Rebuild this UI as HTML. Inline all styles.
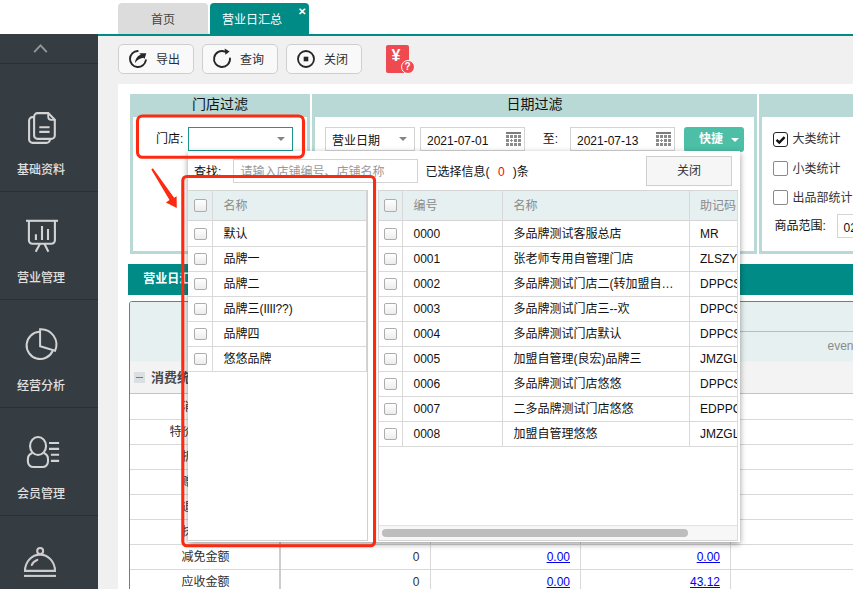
<!DOCTYPE html>
<html lang="zh-CN">
<head>
<meta charset="utf-8">
<title>营业日汇总</title>
<style>
*{box-sizing:border-box;margin:0;padding:0}
html,body{width:853px;height:589px;overflow:hidden;background:#fff}
body{position:relative;font-family:"Liberation Sans","Noto Sans CJK SC",sans-serif;font-size:12px;color:#111}
.abs{position:absolute}
/* top tabs */
#tabline{left:98px;top:34px;width:755px;height:1.9px;background:#008b87}
.tab{top:3.2px;height:31.3px;line-height:34.2px;text-align:center;font-size:12px;border-radius:4px 4px 0 0}
#tab1{left:118px;width:90px;background:#dcdcdc;color:#444}
#tab2{left:210px;width:99px;background:#008b87;color:#fff;text-align:left;padding-left:12px}
#tab2 .x{position:absolute;left:87.5px;top:-8.3px;font-size:10px;font-weight:bold}
/* sidebar */
#side{left:0;top:34px;width:98px;height:555px;background:#353d42}
.sdiv{left:0;width:98px;height:1px;background:#2a3135}
.slabel{left:0;width:82px;text-align:center;color:#e0e0e0;font-size:12px;font-weight:500;line-height:14px}
/* main */
#main{left:98px;top:35.9px;width:755px;height:554px;background:#f0f0f0}
#panel{left:118px;top:84px;width:735px;height:505px;background:#fff}
.btn{top:44px;height:30px;width:76px;border:1px solid #cfcfcf;border-radius:5px;background:#f9f9f9;font-size:12px;line-height:28px;color:#2e2e2e}
.btn span{position:absolute;left:37px;top:0.75px}
.btn svg{position:absolute;left:7px;top:2.2px}
/* filter boxes */
.fbox{top:94px;height:160px;border:3px solid #b8d9d6;border-top-width:23px;background:#fff}
.fhead{top:93px;height:23px;line-height:22px;text-align:center;font-size:14px;color:#111}
.inp{border:1px solid #d4d4d4;background:#fff;height:24px;line-height:22px;font-size:12px;padding-left:6px;padding-top:2.1px;color:#111}
.cb{width:15px;height:15px;border:1px solid #8a8a8a;border-radius:2px;background:#fff}
/* section bar */
#secbar{left:128px;top:264px;width:725px;height:31px;background:#008b87;color:#fff;font-weight:bold;font-size:12px;line-height:31px;padding-left:15.2px}
/* report table */
#rep{left:129px;top:301px;width:727px;height:291px;border:1.3px solid #2a9d98;border-radius:3px;background:#fff}
.hl{height:1px;background:#d9d9d9}
.vl{width:1px;background:#d9d9d9}
.rt{font-size:12px;line-height:14px;color:#303030}
a.lk{color:#0000ee;text-decoration:underline}
/* popup */
#pop{left:188px;top:151px;width:552px;height:391.4px;background:#fff;box-shadow:0 2px 6px rgba(0,0,0,.4)}
.gh{background:#e6f0f0;color:#8a8a8a}
.gcb{width:12.5px;height:12.5px;border:1px solid #adadad;border-radius:2px;background:linear-gradient(#fff,#ececec)}
.grow{font-size:12px;line-height:14px;color:#111}
</style>
</head>
<body>
<!-- top tabs -->
<div class="abs tab" id="tab1">首页</div>
<div class="abs tab" id="tab2">营业日汇总<span class="x">✕</span></div>
<div class="abs" id="tabline"></div>

<!-- main bg -->
<div class="abs" id="main"></div>
<div class="abs" id="panel"></div>

<!-- sidebar -->
<div class="abs" id="side"></div>

<svg class="abs" style="left:0;top:34px" width="98" height="555" viewBox="0 34 98 555" fill="none" stroke="#d3d3d3" stroke-width="1.9" stroke-linecap="round" stroke-linejoin="round">
  <!-- chevron -->
  <path d="M34.2 52.1 L40.5 45.3 L46.8 52.1" stroke="#92979a" stroke-width="1.9" stroke-linecap="butt" stroke-linejoin="miter"/>
  <!-- docs icon -->
  <g stroke-width="2.1">
  <path d="M33 117.1 H32.6 a3.5 3.5 0 0 0 -3.5 3.5 V139.4 a3.5 3.5 0 0 0 3.5 3.5 H46.4 a3.5 3.5 0 0 0 3.5 -3.5 V140"/>
  <path d="M37.6 113.1 H48.2 L54.8 119.8 V135.4 a3.5 3.5 0 0 1 -3.5 3.5 H37.6 a3.5 3.5 0 0 1 -3.5 -3.5 V116.6 a3.5 3.5 0 0 1 3.5 -3.5 Z"/>
  <path d="M48.2 113.1 V116.8 a3 3 0 0 0 3 3 H54.8" stroke-width="1.8"/>
  <path d="M39.3 127.2 H49.6 M39.3 131.9 H49.6" stroke-linecap="butt"/>
  </g>
  <!-- board icon -->
  <g stroke-width="2.1" stroke-linecap="butt">
  <path d="M26 220.8 H58"/>
  <path d="M28.9 220.8 V240.3 a3.5 3.5 0 0 0 3.5 3.5 H51.4 a3.5 3.5 0 0 0 3.5 -3.5 V220.8"/>
  <path d="M40 243.8 L35.7 251.7 M44.4 243.8 L48.4 251.7"/>
  <path d="M35.9 234.2 V239.9 M42 226.1 V239.9 M48 229 V239.9"/>
  </g>
  <!-- pie icon -->
  <path d="M39.1 331.85 A13.6 13.6 0 1 0 52.5 351.2" stroke-width="2"/>
  <path d="M40.1 329.2 A15.4 15.4 0 0 1 55.1 350.7 L40.1 346.3 Z" stroke-width="2" stroke-linejoin="miter"/>
  <!-- member icon -->
  <g stroke-width="2.1">
  <ellipse cx="38.05" cy="446" rx="8" ry="9"/>
  <path d="M31.7 453.3 C29.2 454.4 27.9 456.6 27.9 459.2 V461.5 a5.5 5.5 0 0 0 5.5 5.5 H42.5 a5.5 5.5 0 0 0 5.5 -5.5 V459.2 C48 456.6 46.7 454.4 44.3 453.3"/>
  <path d="M49 443 H59.1 M49 448.9 H59.1 M50.9 454.8 H59.1 M50.9 460.9 H59.1" stroke-linecap="butt"/>
  </g>
  <!-- dome icon -->
  <g stroke-width="2.1" stroke="#cfcbcd">
  <circle cx="40.15" cy="551" r="2.95"/>
  <path d="M25 570.9 A15 16.3 0 0 1 55 570.9 Z" stroke-linejoin="miter"/>
  <path d="M31.8 565 C32.6 562.7 34.8 560.7 37.3 559.9"/>
  <path d="M24 575.9 H56" stroke-linecap="butt"/>
  </g>
</svg>
<div class="abs sdiv" style="top:63px"></div>
<div class="abs sdiv" style="top:191px"></div>
<div class="abs sdiv" style="top:299px"></div>
<div class="abs sdiv" style="top:407px"></div>
<div class="abs sdiv" style="top:515px"></div>
<div class="abs slabel" style="top:163px">基础资料</div>
<div class="abs slabel" style="top:270.8px">营业管理</div>
<div class="abs slabel" style="top:378.6px">经营分析</div>
<div class="abs slabel" style="top:486.8px">会员管理</div>



<div class="abs btn" style="left:118px">
  <svg width="24" height="24" viewBox="0 0 24 24" fill="none" stroke="#262626" stroke-width="1.9" stroke-linecap="round"><path d="M11.7 4 A8 8 0 1 0 19.9 13.2"/><path d="M9 16 C9.2 11.4 12 8.2 15.4 7.4 L17.8 10.8 C14.4 10.9 11.4 12.8 9 16 Z" fill="#262626" stroke="none"/><path d="M13.4 6.2 L20.3 6.2 L18.5 12 Z" fill="#262626" stroke="none"/></svg>
  <span>导出</span></div>
<div class="abs btn" style="left:202px">
  <svg width="24" height="24" viewBox="0 0 24 24" fill="none" stroke="#262626" stroke-width="1.9" stroke-linecap="round" style="left:7px"><path d="M20 11.4 A8 8 0 1 1 15 4.6"/><path d="M14.6 1.6 L19.6 4.6 L15.4 7.8 Z" fill="#262626" stroke="none"/></svg>
  <span>查询</span></div>
<div class="abs btn" style="left:286px">
  <svg width="24" height="24" viewBox="0 0 24 24" fill="none" stroke="#262626" stroke-width="1.8" style="left:6.7px"><circle cx="12" cy="12" r="8"/><rect x="9.7" y="9.7" width="4.6" height="4.6" fill="#262626" stroke="none"/></svg>
  <span>关闭</span></div>
<div class="abs" style="left:386px;top:45px;width:23px;height:28px;background:#ee4a50;border-radius:2px;color:#fff;font-size:16px;font-weight:bold;line-height:16px;padding:2.5px 0 0 5.5px;overflow:hidden">¥</div>
<div class="abs" style="left:400.5px;top:60px;width:14px;height:14px;border-radius:7px;background:#ee4a50;border:1.5px solid #fff;color:#fff;font-size:10px;font-weight:bold;line-height:11px;text-align:center">?</div>

<div class="abs fbox" style="left:130px;width:180px"></div>
<div class="abs fbox" style="left:312px;width:445px"></div>
<div class="abs fbox" style="left:759px;width:110px"></div>
<div class="abs fhead" style="left:130px;width:180px">门店过滤</div>
<div class="abs fhead" style="left:312px;width:445px">日期过滤</div>
<div class="abs" style="left:156px;top:132px;line-height:14px;font-size:12px">门店:</div>
<div class="abs" style="left:188px;top:127px;width:105px;height:24px;border:1px solid #1a9791;background:#fff"></div>
<div class="abs" style="left:277px;top:137.2px;border:4px solid transparent;border-top:4px solid #858585;border-bottom:0"></div>
<div class="abs inp" style="left:325px;top:127px;width:90px">营业日期</div>
<div class="abs" style="left:399px;top:137.2px;border:4px solid transparent;border-top:4px solid #858585;border-bottom:0"></div>
<div class="abs inp" style="left:420px;top:127px;width:104.5px">2021-07-01</div>
<svg class="abs" style="left:506px;top:132px" width="15" height="14" viewBox="0 0 15 14"><rect x="0" y="0" width="15" height="2" fill="#7c7c7c"/><g fill="#8b8b8b"><rect x="0" y="3" width="3" height="3"/><rect x="4" y="3" width="3" height="3"/><rect x="8" y="3" width="3" height="3"/><rect x="12" y="3" width="3" height="3"/><rect x="0" y="7" width="3" height="3"/><rect x="5" y="7" width="1" height="3"/><rect x="4" y="8" width="3" height="1"/><rect x="8" y="7" width="3" height="3"/><rect x="12" y="7" width="3" height="3"/><rect x="0" y="11" width="3" height="3"/><rect x="4" y="11" width="3" height="3"/><rect x="8" y="11" width="3" height="3"/><rect x="12" y="11" width="3" height="3"/></g></svg>
<div class="abs" style="left:542.8px;top:132px;line-height:14px;font-size:12px">至:</div>
<div class="abs inp" style="left:570px;top:127px;width:104.5px">2021-07-13</div>
<svg class="abs" style="left:656px;top:132px" width="15" height="14" viewBox="0 0 15 14"><rect x="0" y="0" width="15" height="2" fill="#7c7c7c"/><g fill="#8b8b8b"><rect x="0" y="3" width="3" height="3"/><rect x="4" y="3" width="3" height="3"/><rect x="8" y="3" width="3" height="3"/><rect x="12" y="3" width="3" height="3"/><rect x="0" y="7" width="3" height="3"/><rect x="5" y="7" width="1" height="3"/><rect x="4" y="8" width="3" height="1"/><rect x="8" y="7" width="3" height="3"/><rect x="12" y="7" width="3" height="3"/><rect x="0" y="11" width="3" height="3"/><rect x="4" y="11" width="3" height="3"/><rect x="8" y="11" width="3" height="3"/><rect x="12" y="11" width="3" height="3"/></g></svg>
<div class="abs" style="left:684px;top:127px;width:60px;height:24.5px;background:#4cbfa6;border-radius:3px;color:#fff;font-weight:bold;font-size:12px;line-height:25px;padding-left:15px">快捷</div>
<div class="abs" style="left:730.5px;top:137.5px;border:4px solid transparent;border-top:4.5px solid #fff;border-bottom:0"></div>
<div class="abs cb" style="left:773px;top:132px;border:1.5px solid #262626;border-radius:3px"></div>
<svg class="abs" style="left:773px;top:132px" width="15" height="15" viewBox="0 0 15 15"><path d="M3.5 7.9 L6.3 10.5 L11.6 5.2" fill="none" stroke="#111" stroke-width="2.4"/></svg>
<div class="abs cb" style="left:773px;top:161px"></div>
<div class="abs cb" style="left:773px;top:190px"></div>
<div class="abs" style="left:792.5px;top:132px;line-height:14px;font-size:12px;color:#333">大类统计</div>
<div class="abs" style="left:792.5px;top:161.5px;line-height:14px;font-size:12px;color:#333">小类统计</div>
<div class="abs" style="left:792.5px;top:190.5px;line-height:14px;font-size:12px;color:#333;white-space:nowrap">出品部统计</div>
<div class="abs" style="left:774.5px;top:218.5px;line-height:14px;font-size:12px;color:#111;white-space:nowrap">商品范围:</div>
<div class="abs inp" style="left:836.5px;top:214px;width:40px">02</div>
<div class="abs" id="secbar">营业日汇总</div>


<div class="abs" id="rep"></div>
<div class="abs" style="left:130px;top:302px;width:723px;height:59px;background:#e6f0f0;border-radius:2px 0 0 0"></div>
<div class="abs hl" style="left:280px;top:331px;width:573px;background:#b9bcbc"></div>
<div class="abs vl" style="left:280px;top:302px;height:59px;background:#cfd6d6"></div>
<div class="abs rt" style="left:130px;top:324px;width:150px;text-align:center;color:#888">项目</div>
<div class="abs rt" style="left:827.5px;top:338.5px;color:#8a8a8a;white-space:nowrap">even</div>
<div class="abs" style="left:130px;top:361px;width:723px;height:33px;background:#f3f3f3;border-top:1px solid #eef2f2;border-bottom:1px solid #c4c4c4"></div>
<div class="abs" style="left:134px;top:372px;width:11px;height:11px;background:#dcdfe2"></div><div class="abs" style="left:136px;top:376.7px;width:7px;height:1.3px;background:#7a7a7a"></div>
<div class="abs" style="left:151px;top:370px;font-size:13px;font-weight:700;line-height:16px;color:#484848">消费统计</div>
<div class="abs hl" style="left:130px;top:419.0px;width:723px"></div>
<div class="abs rt" style="left:130px;top:399.5px;width:99.5px;text-align:right">消费金额</div>
<div class="abs rt" style="left:300px;top:399.5px;width:119.5px;text-align:right">0</div>
<div class="abs rt" style="left:450px;top:399.5px;width:120px;text-align:right"><a class="lk">0.00</a></div>
<div class="abs rt" style="left:600px;top:399.5px;width:120px;text-align:right"><a class="lk">0.00</a></div>
<div class="abs hl" style="left:130px;top:444.0px;width:723px"></div>
<div class="abs rt" style="left:130px;top:424.5px;width:99.5px;text-align:right">特价菜金额</div>
<div class="abs rt" style="left:300px;top:424.5px;width:119.5px;text-align:right">0</div>
<div class="abs rt" style="left:450px;top:424.5px;width:120px;text-align:right"><a class="lk">0.00</a></div>
<div class="abs rt" style="left:600px;top:424.5px;width:120px;text-align:right"><a class="lk">0.00</a></div>
<div class="abs hl" style="left:130px;top:469.0px;width:723px"></div>
<div class="abs rt" style="left:130px;top:449.5px;width:99.5px;text-align:right">折扣金额</div>
<div class="abs rt" style="left:300px;top:449.5px;width:119.5px;text-align:right">0</div>
<div class="abs rt" style="left:450px;top:449.5px;width:120px;text-align:right"><a class="lk">0.00</a></div>
<div class="abs rt" style="left:600px;top:449.5px;width:120px;text-align:right"><a class="lk">0.00</a></div>
<div class="abs hl" style="left:130px;top:494.0px;width:723px"></div>
<div class="abs rt" style="left:130px;top:474.5px;width:99.5px;text-align:right">赠送金额</div>
<div class="abs rt" style="left:300px;top:474.5px;width:119.5px;text-align:right">0</div>
<div class="abs rt" style="left:450px;top:474.5px;width:120px;text-align:right"><a class="lk">0.00</a></div>
<div class="abs rt" style="left:600px;top:474.5px;width:120px;text-align:right"><a class="lk">0.00</a></div>
<div class="abs hl" style="left:130px;top:519.0px;width:723px"></div>
<div class="abs rt" style="left:130px;top:499.5px;width:99.5px;text-align:right">退菜金额</div>
<div class="abs rt" style="left:300px;top:499.5px;width:119.5px;text-align:right">0</div>
<div class="abs rt" style="left:450px;top:499.5px;width:120px;text-align:right"><a class="lk">0.00</a></div>
<div class="abs rt" style="left:600px;top:499.5px;width:120px;text-align:right"><a class="lk">0.00</a></div>
<div class="abs hl" style="left:130px;top:544.0px;width:723px"></div>
<div class="abs rt" style="left:130px;top:524.5px;width:99.5px;text-align:right">抹零金额</div>
<div class="abs rt" style="left:300px;top:524.5px;width:119.5px;text-align:right">0</div>
<div class="abs rt" style="left:450px;top:524.5px;width:120px;text-align:right"><a class="lk">0.00</a></div>
<div class="abs rt" style="left:600px;top:524.5px;width:120px;text-align:right"><a class="lk">0.00</a></div>
<div class="abs hl" style="left:130px;top:569.0px;width:723px"></div>
<div class="abs rt" style="left:130px;top:549.5px;width:99.5px;text-align:right">减免金额</div>
<div class="abs rt" style="left:300px;top:549.5px;width:119.5px;text-align:right">0</div>
<div class="abs rt" style="left:450px;top:549.5px;width:120px;text-align:right"><a class="lk">0.00</a></div>
<div class="abs rt" style="left:600px;top:549.5px;width:120px;text-align:right"><a class="lk">0.00</a></div>
<div class="abs hl" style="left:130px;top:594.0px;width:723px"></div>
<div class="abs rt" style="left:130px;top:574.5px;width:99.5px;text-align:right">应收金额</div>
<div class="abs rt" style="left:300px;top:574.5px;width:119.5px;text-align:right">0</div>
<div class="abs rt" style="left:450px;top:574.5px;width:120px;text-align:right"><a class="lk">0.00</a></div>
<div class="abs rt" style="left:600px;top:574.5px;width:120px;text-align:right"><a class="lk">43.12</a></div>
<div class="abs vl" style="left:279.3px;top:393.5px;height:200px;width:1.3px;background:#cdcdcd"></div>
<div class="abs vl" style="left:430px;top:393.5px;height:200px"></div>
<div class="abs vl" style="left:580px;top:393.5px;height:200px"></div>
<div class="abs vl" style="left:730px;top:393.5px;height:200px"></div>


<div class="abs" id="pop"></div>
<div class="abs" style="left:194px;top:164.8px;font-size:12px;line-height:14px;color:#111">查找:</div>
<div class="abs inp" style="left:233px;top:159px;width:185px;height:23.5px;color:#999;padding-left:6.5px;padding-top:1.3px;white-space:nowrap;overflow:hidden">请输入店铺编号、店铺名称</div>
<div class="abs" style="left:425.5px;top:164.5px;font-size:12px;line-height:14px;color:#111;white-space:nowrap">已选择信息(<span style="color:#f00;margin:0 8px 0 8.5px">0</span>)条</div>
<div class="abs" style="left:646px;top:156px;width:86px;height:29.6px;border:1px solid #cfcfcf;background:#f6f6f6;font-size:12px;line-height:29px;text-align:center;color:#333">关闭</div>
<div class="abs gh" style="left:188px;top:190px;width:178px;height:31px;border-top:1px solid #d5d5d5;border-bottom:1px solid #d5d5d5"></div>
<div class="abs vl" style="left:212px;top:190.5px;height:181px"></div>
<div class="abs gcb" style="left:194px;top:199px"></div>
<div class="abs grow" style="left:223.5px;top:198.5px;color:#8a8a8a">名称</div>
<div class="abs hl" style="left:188px;top:245.5px;width:178px"></div>
<div class="abs gcb" style="left:194px;top:227.5px"></div>
<div class="abs grow" style="left:223.5px;top:227px;white-space:nowrap">默认</div>
<div class="abs hl" style="left:188px;top:270.5px;width:178px"></div>
<div class="abs gcb" style="left:194px;top:252.5px"></div>
<div class="abs grow" style="left:223.5px;top:252px;white-space:nowrap">品牌一</div>
<div class="abs hl" style="left:188px;top:295.5px;width:178px"></div>
<div class="abs gcb" style="left:194px;top:277.5px"></div>
<div class="abs grow" style="left:223.5px;top:277px;white-space:nowrap">品牌二</div>
<div class="abs hl" style="left:188px;top:320.5px;width:178px"></div>
<div class="abs gcb" style="left:194px;top:302.5px"></div>
<div class="abs grow" style="left:223.5px;top:302px;white-space:nowrap">品牌三(<span style="letter-spacing:-0.35px">IIII</span>??)</div>
<div class="abs hl" style="left:188px;top:345.5px;width:178px"></div>
<div class="abs gcb" style="left:194px;top:327.5px"></div>
<div class="abs grow" style="left:223.5px;top:327px;white-space:nowrap">品牌四</div>
<div class="abs hl" style="left:188px;top:370.5px;width:178px"></div>
<div class="abs gcb" style="left:194px;top:352.5px"></div>
<div class="abs grow" style="left:223.5px;top:352px;white-space:nowrap">悠悠品牌</div>
<div class="abs vl" style="left:367px;top:190px;height:350.5px;background:#d0d0d0"></div><div class="abs vl" style="left:366px;top:190px;height:182px;background:#d4d4d4"></div>

<div class="abs hl" style="left:188px;top:540px;width:180px;background:#d2d2d2"></div>
<div class="abs gh" style="left:379px;top:190px;width:358.5px;height:31px;border-top:1px solid #d5d5d5;border-bottom:1px solid #d5d5d5"></div>
<div class="abs gcb" style="left:384px;top:199px"></div>
<div class="abs grow" style="left:413.5px;top:198.5px;color:#8a8a8a">编号</div>
<div class="abs grow" style="left:513.5px;top:198.5px;color:#8a8a8a">名称</div>
<div class="abs grow" style="left:700px;top:198.5px;color:#8a8a8a;width:37.5px;overflow:hidden;white-space:nowrap">助记码</div>
<div class="abs hl" style="left:379px;top:245.5px;width:358.5px"></div>
<div class="abs gcb" style="left:384px;top:227.5px"></div>
<div class="abs grow" style="left:413.5px;top:227px">0000</div>
<div class="abs grow" style="left:513.5px;top:227px;white-space:nowrap">多品牌测试客服总店</div>
<div class="abs grow" style="left:700px;top:227px;width:37.5px;overflow:hidden;white-space:nowrap">MR</div>
<div class="abs hl" style="left:379px;top:270.5px;width:358.5px"></div>
<div class="abs gcb" style="left:384px;top:252.5px"></div>
<div class="abs grow" style="left:413.5px;top:252px">0001</div>
<div class="abs grow" style="left:513.5px;top:252px;white-space:nowrap">张老师专用自管理门店</div>
<div class="abs grow" style="left:700px;top:252px;width:37.5px;overflow:hidden;white-space:nowrap">ZLSZYZGLMD</div>
<div class="abs hl" style="left:379px;top:295.5px;width:358.5px"></div>
<div class="abs gcb" style="left:384px;top:277.5px"></div>
<div class="abs grow" style="left:413.5px;top:277px">0002</div>
<div class="abs grow" style="left:513.5px;top:277px;white-space:nowrap">多品牌测试门店二(转加盟自…</div>
<div class="abs grow" style="left:700px;top:277px;width:37.5px;overflow:hidden;white-space:nowrap">DPPCSMD</div>
<div class="abs hl" style="left:379px;top:320.5px;width:358.5px"></div>
<div class="abs gcb" style="left:384px;top:302.5px"></div>
<div class="abs grow" style="left:413.5px;top:302px">0003</div>
<div class="abs grow" style="left:513.5px;top:302px;white-space:nowrap">多品牌测试门店三--欢</div>
<div class="abs grow" style="left:700px;top:302px;width:37.5px;overflow:hidden;white-space:nowrap">DPPCSMD</div>
<div class="abs hl" style="left:379px;top:345.5px;width:358.5px"></div>
<div class="abs gcb" style="left:384px;top:327.5px"></div>
<div class="abs grow" style="left:413.5px;top:327px">0004</div>
<div class="abs grow" style="left:513.5px;top:327px;white-space:nowrap">多品牌测试门店默认</div>
<div class="abs grow" style="left:700px;top:327px;width:37.5px;overflow:hidden;white-space:nowrap">DPPCSMD</div>
<div class="abs hl" style="left:379px;top:370.5px;width:358.5px"></div>
<div class="abs gcb" style="left:384px;top:352.5px"></div>
<div class="abs grow" style="left:413.5px;top:352px">0005</div>
<div class="abs grow" style="left:513.5px;top:352px;white-space:nowrap">加盟自管理(良宏)品牌三</div>
<div class="abs grow" style="left:700px;top:352px;width:37.5px;overflow:hidden;white-space:nowrap">JMZGLLH</div>
<div class="abs hl" style="left:379px;top:395.5px;width:358.5px"></div>
<div class="abs gcb" style="left:384px;top:377.5px"></div>
<div class="abs grow" style="left:413.5px;top:377px">0006</div>
<div class="abs grow" style="left:513.5px;top:377px;white-space:nowrap">多品牌测试门店悠悠</div>
<div class="abs grow" style="left:700px;top:377px;width:37.5px;overflow:hidden;white-space:nowrap">DPPCSMD</div>
<div class="abs hl" style="left:379px;top:420.5px;width:358.5px"></div>
<div class="abs gcb" style="left:384px;top:402.5px"></div>
<div class="abs grow" style="left:413.5px;top:402px">0007</div>
<div class="abs grow" style="left:513.5px;top:402px;white-space:nowrap">二多品牌测试门店悠悠</div>
<div class="abs grow" style="left:700px;top:402px;width:37.5px;overflow:hidden;white-space:nowrap">EDPPCSMD</div>
<div class="abs hl" style="left:379px;top:445.5px;width:358.5px"></div>
<div class="abs gcb" style="left:384px;top:427.5px"></div>
<div class="abs grow" style="left:413.5px;top:427px">0008</div>
<div class="abs grow" style="left:513.5px;top:427px;white-space:nowrap">加盟自管理悠悠</div>
<div class="abs grow" style="left:700px;top:427px;width:37.5px;overflow:hidden;white-space:nowrap">JMZGLYY</div>
<div class="abs vl" style="left:402px;top:190.5px;height:256px"></div>
<div class="abs vl" style="left:502px;top:190.5px;height:256px"></div>
<div class="abs vl" style="left:689px;top:190.5px;height:256px"></div>
<div class="abs vl" style="left:378px;top:190px;height:350.5px;background:#d4d4d4"></div>
<div class="abs vl" style="left:737px;top:190.5px;height:350px;background:#dcdcdc"></div>
<div class="abs" style="left:379px;top:525px;width:358px;height:15.6px;background:#f7f7f7;border-top:1px solid #e2e2e2;border-bottom:1px solid #d4d4d4"></div>
<div class="abs" style="left:382px;top:529px;width:305.5px;height:8px;border-radius:4px;background:#bdbdbd"></div>



<svg id="annot" class="abs" style="left:0;top:0;pointer-events:none" width="853" height="589" viewBox="0 0 853 589" fill="none" stroke="#fc2a10" stroke-width="3.1">
  <rect x="137.5" y="116" width="166" height="41.3" rx="5"/>
  <rect x="182.8" y="176.5" width="191.75" height="369.3" rx="4"/>
  <path d="M151.3 169.5 L152.9 168.2 L174.1 197.8 L176.6 196.2 L176.8 207.9 L165.9 202.5 L169.5 199.9 Z" fill="#fc2a10" stroke="none"/>
</svg>

</body>
</html>
